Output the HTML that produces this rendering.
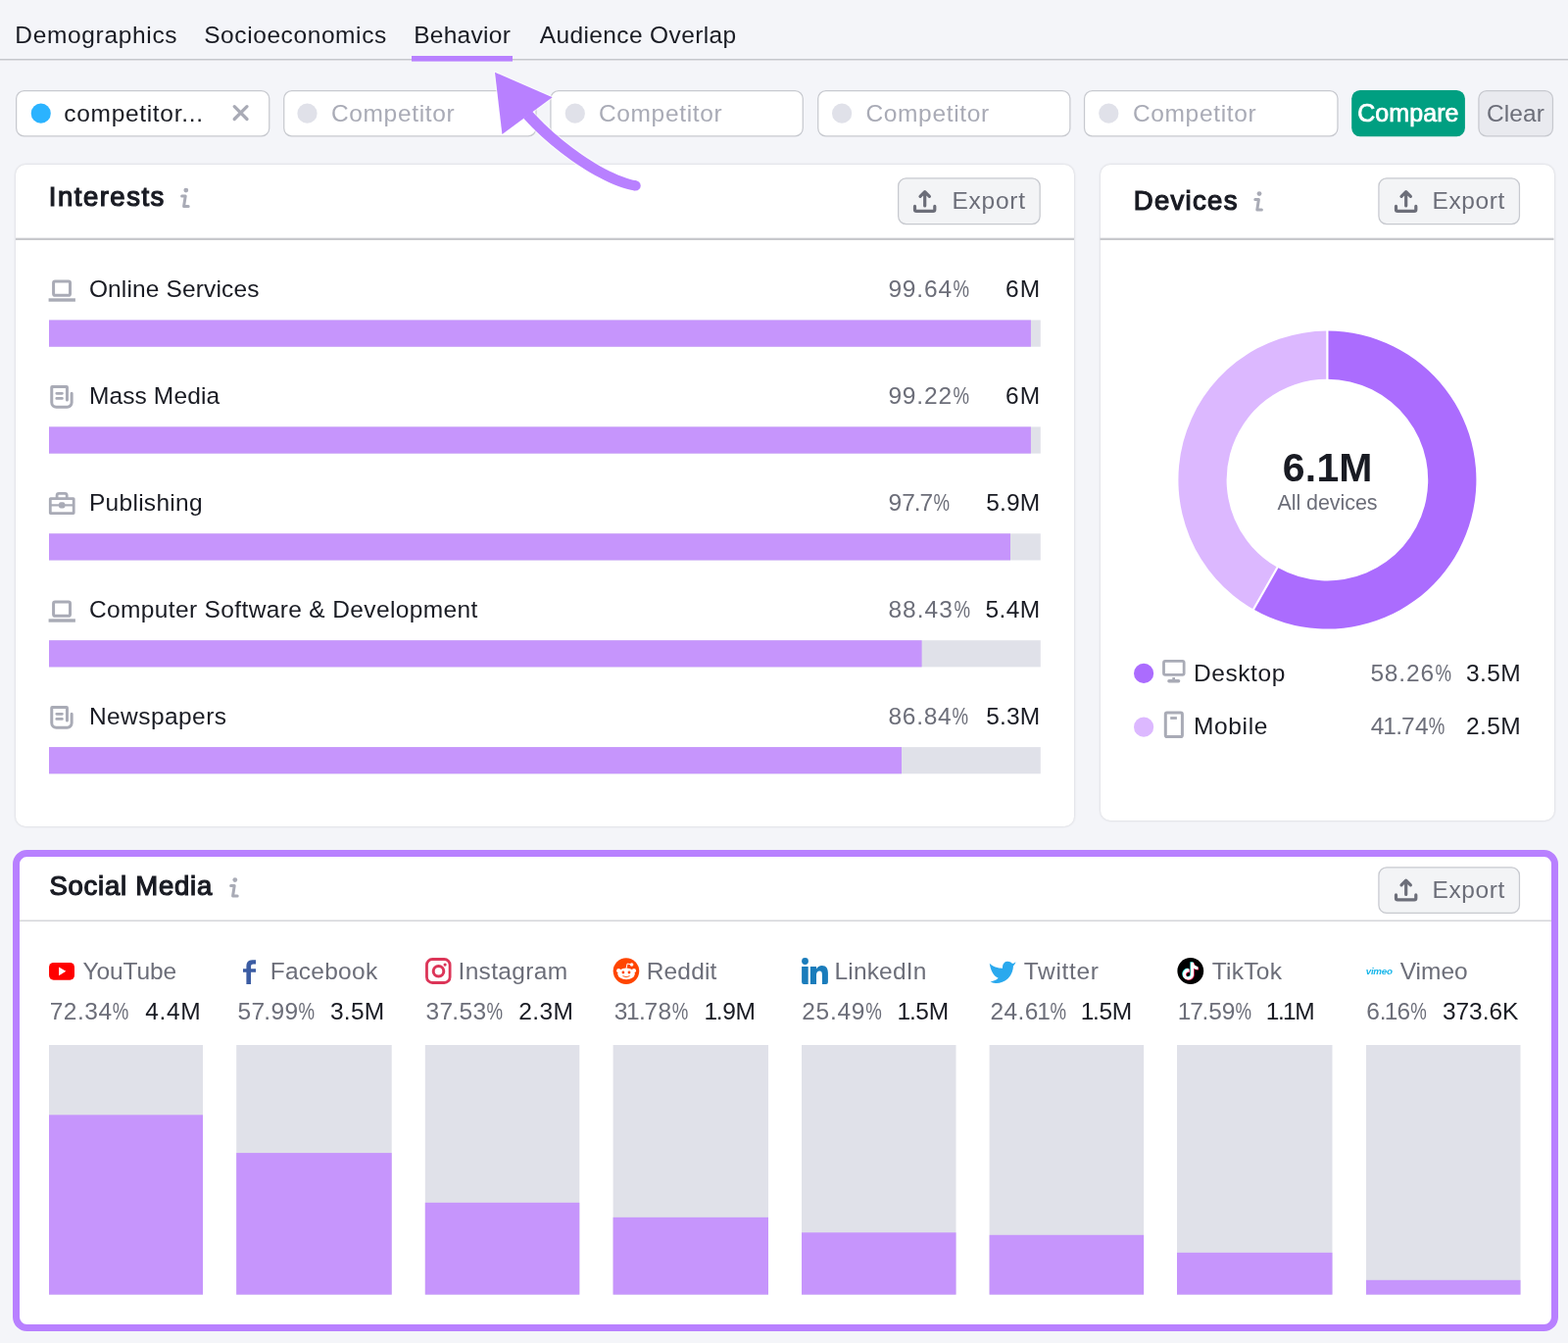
<!DOCTYPE html>
<html lang="en">
<head>
<meta charset="utf-8">
<title>Audience Behavior</title>
<style>
*{box-sizing:border-box}
html,body{margin:0;padding:0}
body{width:1600px;height:1370px;position:relative;overflow:hidden;background:#f4f5f9;font-family:"Liberation Sans",sans-serif;color:#191b23}
.a{position:absolute}
svg{position:absolute;left:0;top:0;overflow:visible}
.card{background:#fff;border-radius:10px;box-shadow:0 0 2.5px rgba(25,27,35,.2)}
.frame{left:13px;top:867px;width:1577px;height:491px;border:7px solid #b880ff;border-radius:14.5px;background:#fff}
.tx{left:0;top:0;width:1600px;height:1370px;will-change:transform}
.tx nav,.tx form,.tx section,.tx header,.tx ul,.tx li,.tx h2,.tx p{display:contents;margin:0;padding:0;font:inherit}
span.m{position:absolute;white-space:pre}
b.n1{font-weight:inherit;margin:0 -0.04em 0 -0.07em}
b.k7{font-weight:inherit;margin-right:-0.06em}
b.pc{font-weight:inherit;display:inline-block;transform:scaleX(.76);transform-origin:0 50%}
</style>
</head>
<body>

<div class="a card" style="left:16px;top:167.5px;width:1080px;height:675.5px"></div>

<div class="a card" style="left:1122.5px;top:167.5px;width:463px;height:669.5px"></div>


<div class="a frame"></div>
<svg width="1600" height="1370" viewBox="0 0 1600 1370">
<rect x="0" y="60" width="1600" height="1.5" fill="#c5c7cc"/>
<rect x="16" y="242.7" width="1080" height="2.3" fill="#c7c8cc"/>
<rect x="1122.5" y="242.7" width="463" height="2.3" fill="#c7c8cc"/>
<rect x="20" y="938.5" width="1563" height="1.5" fill="#d5d6da"/>
<rect x="16.62" y="92.62" width="258.15" height="46.15" rx="7.97" fill="#fff" stroke="#c7c9cf" stroke-width="1.25"/>
<rect x="289.73" y="92.62" width="257.25" height="46.15" rx="7.97" fill="#fff" stroke="#c7c9cf" stroke-width="1.25"/>
<rect x="561.92" y="92.62" width="257.35" height="46.15" rx="7.97" fill="#fff" stroke="#c7c9cf" stroke-width="1.25"/>
<rect x="834.73" y="92.62" width="257.15" height="46.15" rx="7.97" fill="#fff" stroke="#c7c9cf" stroke-width="1.25"/>
<rect x="1106.53" y="92.62" width="258.45" height="46.15" rx="7.97" fill="#fff" stroke="#c7c9cf" stroke-width="1.25"/>
<rect x="1379.20" y="91.90" width="115.70" height="47.30" rx="8.60" fill="#009f81"/>
<rect x="1508.92" y="92.62" width="75.55" height="46.15" rx="7.97" fill="#e9eaef" stroke="#c7c9cf" stroke-width="1.25"/>
<rect x="916.62" y="181.93" width="144.55" height="46.65" rx="7.97" fill="#f3f4f6" stroke="#c7c9cf" stroke-width="1.25"/>
<rect x="1406.92" y="181.93" width="143.55" height="46.65" rx="7.97" fill="#f3f4f6" stroke="#c7c9cf" stroke-width="1.25"/>
<rect x="1406.92" y="884.92" width="143.55" height="46.55" rx="7.97" fill="#f3f4f6" stroke="#c7c9cf" stroke-width="1.25"/>
<rect x="420" y="57" width="103" height="5.6" fill="#b880ff"/>
<circle cx="41.75" cy="115.65" r="10.05" fill="#2bb3ff"/>
<circle cx="313.5" cy="115.7" r="10.1" fill="#e0e1e9"/>
<circle cx="586.8" cy="115.7" r="10.1" fill="#e0e1e9"/>
<circle cx="859.1" cy="115.7" r="10.1" fill="#e0e1e9"/>
<circle cx="1131.3" cy="115.7" r="10.1" fill="#e0e1e9"/>
<rect x="50.0" y="326.50" width="1011.80" height="27.2" fill="#e0e1e9"/>
<rect x="50.0" y="326.50" width="1001.90" height="27.2" fill="#c695fc"/>
<rect x="50.0" y="435.40" width="1011.80" height="27.2" fill="#e0e1e9"/>
<rect x="50.0" y="435.40" width="1001.90" height="27.2" fill="#c695fc"/>
<rect x="50.0" y="544.30" width="1011.80" height="27.2" fill="#e0e1e9"/>
<rect x="50.0" y="544.30" width="981.00" height="27.2" fill="#c695fc"/>
<rect x="50.0" y="653.20" width="1011.80" height="27.2" fill="#e0e1e9"/>
<rect x="50.0" y="653.20" width="890.60" height="27.2" fill="#c695fc"/>
<rect x="50.0" y="762.10" width="1011.80" height="27.2" fill="#e0e1e9"/>
<rect x="50.0" y="762.10" width="870.00" height="27.2" fill="#c695fc"/>
<rect x="50" y="1066" width="157.00" height="254.6" fill="#e0e1e9"/>
<rect x="50" y="1137.3" width="157.00" height="183.30" fill="#c695fc"/>
<rect x="241.2" y="1066" width="158.50" height="254.6" fill="#e0e1e9"/>
<rect x="241.2" y="1176.1" width="158.50" height="144.50" fill="#c695fc"/>
<rect x="433.8" y="1066" width="157.50" height="254.6" fill="#e0e1e9"/>
<rect x="433.8" y="1226.8" width="157.50" height="93.80" fill="#c695fc"/>
<rect x="625.6" y="1066" width="158.40" height="254.6" fill="#e0e1e9"/>
<rect x="625.6" y="1241.8" width="158.40" height="78.80" fill="#c695fc"/>
<rect x="818" y="1066" width="157.50" height="254.6" fill="#e0e1e9"/>
<rect x="818" y="1257.3" width="157.50" height="63.30" fill="#c695fc"/>
<rect x="1009.6" y="1066" width="157.50" height="254.6" fill="#e0e1e9"/>
<rect x="1009.6" y="1259.8" width="157.50" height="60.80" fill="#c695fc"/>
<rect x="1201" y="1066" width="158.50" height="254.6" fill="#e0e1e9"/>
<rect x="1201" y="1277.8" width="158.50" height="42.80" fill="#c695fc"/>
<rect x="1394" y="1066" width="157.50" height="254.6" fill="#e0e1e9"/>
<rect x="1394" y="1305.8" width="157.50" height="14.80" fill="#c695fc"/>
<path d="M239.2,108.69999999999999 L252.0,121.5 M252.0,108.69999999999999 L239.2,121.5" fill="none" stroke="#a9abb6" stroke-width="3.3" stroke-linecap="round"/>
<g transform="translate(184,191.5)" fill="none" stroke="#a9abb6" stroke-width="3" stroke-linecap="round" stroke-linejoin="round"><circle cx="5.8" cy="2.6" r="2.4" fill="#a9abb6" stroke="none"/><path d="M1.6,8.5 H5.2 L3.6,18.9 H8.2"/></g>
<g transform="translate(1279.2,195)" fill="none" stroke="#a9abb6" stroke-width="3" stroke-linecap="round" stroke-linejoin="round"><circle cx="5.8" cy="2.6" r="2.4" fill="#a9abb6" stroke="none"/><path d="M1.6,8.5 H5.2 L3.6,18.9 H8.2"/></g>
<g transform="translate(234,895)" fill="none" stroke="#a9abb6" stroke-width="3" stroke-linecap="round" stroke-linejoin="round"><circle cx="5.8" cy="2.6" r="2.4" fill="#a9abb6" stroke="none"/><path d="M1.6,8.5 H5.2 L3.6,18.9 H8.2"/></g>
<g transform="translate(931.9,193.4)" fill="none" stroke="#6c6e79" stroke-width="3.2" stroke-linecap="round" stroke-linejoin="round"><path d="M11.8,16.6 V2.4 M7.1,7.0 L11.8,2.3 L16.5,7.0"/><path d="M1.6,17 V20.4 a1.6 1.6 0 0 0 1.6 1.6 H20.3 a1.6 1.6 0 0 0 1.6 -1.6 V17"/></g>
<g transform="translate(1422.9,193.4)" fill="none" stroke="#6c6e79" stroke-width="3.2" stroke-linecap="round" stroke-linejoin="round"><path d="M11.8,16.6 V2.4 M7.1,7.0 L11.8,2.3 L16.5,7.0"/><path d="M1.6,17 V20.4 a1.6 1.6 0 0 0 1.6 1.6 H20.3 a1.6 1.6 0 0 0 1.6 -1.6 V17"/></g>
<g transform="translate(1422.9,895.9)" fill="none" stroke="#6c6e79" stroke-width="3.2" stroke-linecap="round" stroke-linejoin="round"><path d="M11.8,16.6 V2.4 M7.1,7.0 L11.8,2.3 L16.5,7.0"/><path d="M1.6,17 V20.4 a1.6 1.6 0 0 0 1.6 1.6 H20.3 a1.6 1.6 0 0 0 1.6 -1.6 V17"/></g>
<g transform="translate(49.6,285.6)" fill="none" stroke="#a9abb6"><rect x="5" y="1.5" width="16.9" height="14.2" rx="1.6" stroke-width="3"/><rect x="0" y="18.7" width="27.3" height="3.4" fill="#a9abb6" stroke="none"/></g>
<g transform="translate(51.25,392.9)" fill="none" stroke="#a9abb6" stroke-linecap="round" stroke-linejoin="round"><path d="M17.2,15.2 V2 a0.5 0.5 0 0 0 -0.5 -0.5 H2 a0.5 0.5 0 0 0 -0.5 0.5 V17.6 a4.7 4.7 0 0 0 4.7 4.7 H17.2 a4.7 4.7 0 0 0 4.7 -4.7 V8.3" stroke-width="3"/><path d="M6.5,8.4 H12.2 M6.5,13.5 H12.2" stroke-width="2.7"/></g>
<g transform="translate(49.9,502.06)" fill="none" stroke="#a9abb6"><rect x="1.4" y="6.5" width="23.9" height="15" rx="0.3" stroke-width="2.8"/><path d="M8.2,6 V3.3 a2 2 0 0 1 2 -2 H16.3 a2 2 0 0 1 2 2 V6" stroke-width="2.8"/><path d="M1.4,13.3 H25.3" stroke-width="2.2"/><rect x="10.1" y="10.1" width="6.3" height="6.4" rx="2" fill="#a9abb6" stroke="none"/></g>
<g transform="translate(49.6,612.6)" fill="none" stroke="#a9abb6"><rect x="5" y="1.5" width="16.9" height="14.2" rx="1.6" stroke-width="3"/><rect x="0" y="18.7" width="27.3" height="3.4" fill="#a9abb6" stroke="none"/></g>
<g transform="translate(51.25,719.9)" fill="none" stroke="#a9abb6" stroke-linecap="round" stroke-linejoin="round"><path d="M17.2,15.2 V2 a0.5 0.5 0 0 0 -0.5 -0.5 H2 a0.5 0.5 0 0 0 -0.5 0.5 V17.6 a4.7 4.7 0 0 0 4.7 4.7 H17.2 a4.7 4.7 0 0 0 4.7 -4.7 V8.3" stroke-width="3"/><path d="M6.5,8.4 H12.2 M6.5,13.5 H12.2" stroke-width="2.7"/></g>
<path d="M1354.40,337.60 A152.0,152.0 0 1 1 1279.01,621.58 L1303.41,578.86 A102.8,102.8 0 1 0 1354.40,386.80 Z" fill="#ab6cfe"/>
<path d="M1279.01,621.58 A152.0,152.0 0 0 1 1354.40,337.60 L1354.40,386.80 A102.8,102.8 0 0 0 1303.41,578.86 Z" fill="#dcb8ff"/>
<path d="M1354.40,387.80 L1354.40,336.60" stroke="#fff" stroke-width="2.2" fill="none"/>
<path d="M1303.91,577.99 L1278.51,622.45" stroke="#fff" stroke-width="2.2" fill="none"/>
<g fill="none" stroke="#a9abb6"><rect x="1187.5" y="674.35" width="20.65" height="14" rx="1.6" stroke-width="2.8"/><path d="M1192.9,694.8 H1202.6" stroke-width="3.4" stroke-linecap="round"/><rect x="1196.3" y="691" width="2.7" height="3" fill="#a9abb6" stroke="none"/></g>
<g fill="none" stroke="#a9abb6"><rect x="1189.3" y="727.1" width="17.1" height="24.4" rx="1.6" stroke-width="3"/><rect x="1194.2" y="731.1" width="6.7" height="2.8" fill="#a9abb6" stroke="none"/></g>
<circle cx="1167.1" cy="686.9" r="10.1" fill="#ab6cfe"/><circle cx="1167.1" cy="741.65" r="10.1" fill="#dcb8ff"/>
<rect x="50.05" y="981.9" width="25.95" height="17.8" rx="4.6" fill="#ff0000"/><path d="M60.1,986.4 L67.3,990.8 L60.1,995.2 Z" fill="#fff"/>
<path d="M251.4,1004.1 V991.75 H248 V988.2 H251.4 V985.3 C251.4,981.4 253.8,979.2 257.7,979.2 H261.1 V983.4 H258.7 C256.8,983.4 256.06,984.2 256.06,985.9 V988.2 H261.1 V991.75 H256.06 V1004.1 Z" fill="#3b5ca3"/>
<g fill="none" stroke="#dc3558" stroke-width="2.8"><rect x="435.46" y="978.5" width="23.64" height="24" rx="5.8"/><circle cx="447.5" cy="990.8" r="5.3" stroke-width="3"/><circle cx="454.1" cy="984.1" r="1.6" fill="#dc3558" stroke="none"/></g>
<circle cx="638.95" cy="990.6" r="13.3" fill="#ff4500"/><g fill="#fff"><ellipse cx="639.05" cy="993.3" rx="8.8" ry="5.9"/><circle cx="631.2" cy="990.2" r="2.1"/><circle cx="646.9" cy="990.2" r="2.1"/><circle cx="644.6" cy="984" r="1.8"/><path d="M639.1,987.8 L640.1,983 L644.6,984" fill="none" stroke="#fff" stroke-width="1"/></g><circle cx="635.9" cy="992" r="1.4" fill="#ff4500"/><circle cx="642" cy="992" r="1.4" fill="#ff4500"/><path d="M635.8,995.8 Q639.05,997.8 642.3,995.8" fill="none" stroke="#ff4500" stroke-width="0.9" stroke-linecap="round"/>
<g fill="#1a7cbb"><circle cx="821.5" cy="980.5" r="3.4"/><path d="M818.1,986.1 H824.7 V1004.1 H820.1 a2 2 0 0 1 -2 -2 Z"/><path d="M826.9,986.1 H833 V988.6 C834.2,986.3 836.2,985 838.7,985 C843.2,985 844.9,988 844.9,992.6 V1002.1 a2 2 0 0 1 -2 2 H838.9 V994.4 C838.9,992.2 838.3,990.6 836.3,990.6 C834.1,990.6 833,992.3 833,994.6 V1004.1 H826.9 Z"/></g>
<path d="M1027.62,980.80 C1030.62,980.65 1032.31,982.00 1032.95,983.12 C1034.19,982.75 1035.50,982.00 1036.44,981.14 C1036.06,982.94 1035.12,984.25 1034.00,985.19 C1033.81,989.50 1032.50,994.00 1028.75,997.94 C1025.00,1001.69 1019.37,1003.45 1015.81,1003.07 C1013.75,1002.85 1011.87,1002.06 1010.45,1001.20 C1013.75,1000.82 1016.75,999.62 1018.70,997.82 C1014.50,995.87 1010.94,991.00 1009.74,982.67 C1013.00,985.75 1017.50,987.55 1023.05,987.70 C1022.67,984.25 1024.62,981.06 1027.62,980.80 Z" fill="#2aa9ee"/>
<circle cx="1214.8" cy="990.5" r="13.4" fill="#000"/><path transform="translate(1205.10,981.22) scale(0.74)" d="M12.525.02c1.31-.02 2.61-.01 3.91-.02.08 1.53.63 3.09 1.75 4.17 1.12 1.11 2.7 1.62 4.24 1.79v4.03c-1.44-.05-2.89-.35-4.2-.97-.57-.26-1.1-.59-1.62-.93-.01 2.92.01 5.84-.02 8.75-.08 1.4-.54 2.79-1.35 3.94-1.31 1.92-3.58 3.17-5.91 3.21-1.43.08-2.86-.31-4.08-1.03-2.02-1.19-3.44-3.37-3.65-5.71-.02-.5-.03-1-.01-1.49.18-1.9 1.12-3.72 2.58-4.96 1.66-1.44 3.98-2.13 6.15-1.72.02 1.48-.04 2.96-.04 4.44-.99-.32-2.15-.23-3.02.37-.63.41-1.11 1.04-1.36 1.75-.21.51-.15 1.07-.14 1.61.24 1.64 1.82 3.02 3.5 2.87 1.12-.01 2.19-.66 2.77-1.61.19-.33.4-.67.41-1.06.1-1.79.06-3.57.07-5.36.01-4.03-.01-8.05.02-12.07z" fill="#3ff0ea"/><path transform="translate(1206.50,982.22) scale(0.74)" d="M12.525.02c1.31-.02 2.61-.01 3.91-.02.08 1.53.63 3.09 1.75 4.17 1.12 1.11 2.7 1.62 4.24 1.79v4.03c-1.44-.05-2.89-.35-4.2-.97-.57-.26-1.1-.59-1.62-.93-.01 2.92.01 5.84-.02 8.75-.08 1.4-.54 2.79-1.35 3.94-1.31 1.92-3.58 3.17-5.91 3.21-1.43.08-2.86-.31-4.08-1.03-2.02-1.19-3.44-3.37-3.65-5.71-.02-.5-.03-1-.01-1.49.18-1.9 1.12-3.72 2.58-4.96 1.66-1.44 3.98-2.13 6.15-1.72.02 1.48-.04 2.96-.04 4.44-.99-.32-2.15-.23-3.02.37-.63.41-1.11 1.04-1.36 1.75-.21.51-.15 1.07-.14 1.61.24 1.64 1.82 3.02 3.5 2.87 1.12-.01 2.19-.66 2.77-1.61.19-.33.4-.67.41-1.06.1-1.79.06-3.57.07-5.36.01-4.03-.01-8.05.02-12.07z" fill="#f3235a"/><path transform="translate(1205.80,981.72) scale(0.74)" d="M12.525.02c1.31-.02 2.61-.01 3.91-.02.08 1.53.63 3.09 1.75 4.17 1.12 1.11 2.7 1.62 4.24 1.79v4.03c-1.44-.05-2.89-.35-4.2-.97-.57-.26-1.1-.59-1.62-.93-.01 2.92.01 5.84-.02 8.75-.08 1.4-.54 2.79-1.35 3.94-1.31 1.92-3.58 3.17-5.91 3.21-1.43.08-2.86-.31-4.08-1.03-2.02-1.19-3.44-3.37-3.65-5.71-.02-.5-.03-1-.01-1.49.18-1.9 1.12-3.72 2.58-4.96 1.66-1.44 3.98-2.13 6.15-1.72.02 1.48-.04 2.96-.04 4.44-.99-.32-2.15-.23-3.02.37-.63.41-1.11 1.04-1.36 1.75-.21.51-.15 1.07-.14 1.61.24 1.64 1.82 3.02 3.5 2.87 1.12-.01 2.19-.66 2.77-1.61.19-.33.4-.67.41-1.06.1-1.79.06-3.57.07-5.36.01-4.03-.01-8.05.02-12.07z" fill="#fff"/>
</svg>
<div class="a tx">
<nav aria-label="Report sections">
<span class="m" style="left:15px;top:21px;transform:translateX(0.3px);line-height:29px;font-size:24.5px;font-weight:400;letter-spacing:0.665px;color:#191b23;">Demographics</span>
<span class="m" style="left:208px;top:21px;transform:translateX(0.15px);line-height:29px;font-size:24.5px;font-weight:400;letter-spacing:0.592px;color:#191b23;">Socioeconomics</span>
<span class="m" style="left:422px;top:21px;transform:translateX(0.15px);line-height:29px;font-size:24.5px;font-weight:400;letter-spacing:0.28px;color:#191b23;">Behavior</span>
<span class="m" style="left:550px;top:21px;transform:translateX(0.8px);line-height:29px;font-size:24.5px;font-weight:400;letter-spacing:0.369px;color:#191b23;">Audience Overlap</span>
</nav>
<form aria-label="Competitors">
<span class="m" style="left:65px;top:101px;transform:translateX(0.3px);line-height:29px;font-size:24.5px;font-weight:400;letter-spacing:0.683px;color:#191b23;">competitor...</span>
<span class="m" style="left:337px;top:101px;transform:translateX(0.9px);line-height:29px;font-size:24.5px;font-weight:400;letter-spacing:0.662px;color:#a9abb6;">Competitor</span>
<span class="m" style="left:610px;top:101px;transform:translateX(0.9px);line-height:29px;font-size:24.5px;font-weight:400;letter-spacing:0.662px;color:#a9abb6;">Competitor</span>
<span class="m" style="left:883px;top:101px;transform:translateX(0.4px);line-height:29px;font-size:24.5px;font-weight:400;letter-spacing:0.662px;color:#a9abb6;">Competitor</span>
<span class="m" style="left:1155px;top:101px;transform:translateX(0.9px);line-height:29px;font-size:24.5px;font-weight:400;letter-spacing:0.662px;color:#a9abb6;">Competitor</span>
<span class="m" style="left:1385px;top:100px;transform:translateX(0.22px);line-height:30px;font-size:25px;font-weight:400;letter-spacing:0.08px;color:#ffffff;-webkit-text-stroke-width:0.7px;">Compare</span>
<span class="m" style="left:1516px;top:101px;transform:translateX(0.9px);line-height:29px;font-size:24.5px;font-weight:400;letter-spacing:0.114px;color:#6c6e79;">Clear</span>
</form>
<header aria-label="Card headers">
<span class="m" style="left:49px;top:184px;transform:translateX(0.77px);line-height:33px;font-size:27.5px;font-weight:400;letter-spacing:1.513px;color:#191b23;-webkit-text-stroke-width:1.2px;">Interests</span>
<span class="m" style="left:1156px;top:188px;transform:translateX(0.75px);line-height:33px;font-size:27.5px;font-weight:400;letter-spacing:1.317px;color:#191b23;-webkit-text-stroke-width:1.2px;">Devices</span>
<span class="m" style="left:50px;top:887px;transform:translateX(0.45px);line-height:33px;font-size:27.5px;font-weight:400;letter-spacing:0.759px;color:#191b23;-webkit-text-stroke-width:1.2px;">Social Media</span>
<span class="m" style="left:971px;top:190px;transform:translateX(0.4px);line-height:29px;font-size:24.5px;font-weight:400;letter-spacing:0.762px;color:#6c6e79;">Export</span>
<span class="m" style="left:1461px;top:190px;transform:translateX(0.4px);line-height:29px;font-size:24.5px;font-weight:400;letter-spacing:0.641px;color:#6c6e79;">Export</span>
<span class="m" style="left:1461px;top:893px;transform:translateX(0.4px);line-height:29px;font-size:24.5px;font-weight:400;letter-spacing:0.641px;color:#6c6e79;">Export</span>
</header>
<section aria-label="Interests">
<span class="m" style="left:90px;top:280px;transform:translateX(0.9px);line-height:29px;font-size:24.5px;font-weight:400;letter-spacing:0.137px;color:#191b23;">Online Services</span>
<span class="m" style="left:906px;top:280px;transform:translateX(0.4px);line-height:29px;font-size:24.5px;font-weight:400;letter-spacing:0.84px;color:#6c6e79;">99.64<b class="pc">%</b></span>
<span class="m" style="left:1025px;top:280px;transform:translateX(0.9px);line-height:29px;font-size:24.5px;font-weight:400;letter-spacing:1.286px;color:#191b23;">6M</span>
<span class="m" style="left:90px;top:389px;transform:translateX(0.9px);line-height:29px;font-size:24.5px;font-weight:400;letter-spacing:0.123px;color:#191b23;">Mass Media</span>
<span class="m" style="left:906px;top:389px;transform:translateX(0.4px);line-height:29px;font-size:24.5px;font-weight:400;letter-spacing:0.84px;color:#6c6e79;">99.22<b class="pc">%</b></span>
<span class="m" style="left:1025px;top:389px;transform:translateX(0.9px);line-height:29px;font-size:24.5px;font-weight:400;letter-spacing:1.286px;color:#191b23;">6M</span>
<span class="m" style="left:90px;top:498px;transform:translateX(0.9px);line-height:29px;font-size:24.5px;font-weight:400;letter-spacing:0.299px;color:#191b23;">Publishing</span>
<span class="m" style="left:906px;top:498px;transform:translateX(0.4px);line-height:29px;font-size:24.5px;font-weight:400;letter-spacing:0.3px;color:#6c6e79;">9<b class="k7">7</b><b class="k7">.</b>7<b class="pc">%</b></span>
<span class="m" style="left:1006px;top:498px;transform:translateX(0.15px);line-height:29px;font-size:24.5px;font-weight:400;letter-spacing:0.181px;color:#191b23;">5.9M</span>
<span class="m" style="left:90px;top:607px;transform:translateX(0.9px);line-height:29px;font-size:24.5px;font-weight:400;letter-spacing:0.367px;color:#191b23;">Computer Software &amp; Development</span>
<span class="m" style="left:906px;top:607px;transform:translateX(0.4px);line-height:29px;font-size:24.5px;font-weight:400;letter-spacing:1.04px;color:#6c6e79;">88.43<b class="pc">%</b></span>
<span class="m" style="left:1005px;top:607px;transform:translateX(0.4px);line-height:29px;font-size:24.5px;font-weight:400;letter-spacing:0.4px;color:#191b23;">5.4M</span>
<span class="m" style="left:90px;top:716px;transform:translateX(0.9px);line-height:29px;font-size:24.5px;font-weight:400;letter-spacing:0.436px;color:#191b23;">Newspapers</span>
<span class="m" style="left:906px;top:716px;transform:translateX(0.4px);line-height:29px;font-size:24.5px;font-weight:400;letter-spacing:0.76px;color:#6c6e79;">86.84<b class="pc">%</b></span>
<span class="m" style="left:1006px;top:716px;transform:translateX(0.15px);line-height:29px;font-size:24.5px;font-weight:400;letter-spacing:0.181px;color:#191b23;">5.3M</span>
</section>
<section aria-label="Devices">
<span class="m" style="left:1308px;top:453px;transform:translateX(0.87px);line-height:49px;font-size:41px;font-weight:700;letter-spacing:0.168px;color:#191b23;">6.1M</span>
<span class="m" style="left:1303px;top:500px;transform:translateX(0.4px);line-height:26px;font-size:21.5px;font-weight:400;letter-spacing:-0.06px;color:#6c6e79;">All devices</span>
<span class="m" style="left:1217px;top:672px;transform:translateX(0.9px);line-height:29px;font-size:24.5px;font-weight:400;letter-spacing:0.59px;color:#191b23;">Desktop</span>
<span class="m" style="left:1398px;top:672px;transform:translateX(0.4px);line-height:29px;font-size:24.5px;font-weight:400;letter-spacing:0.84px;color:#6c6e79;">58.26<b class="pc">%</b></span>
<span class="m" style="left:1495px;top:672px;transform:translateX(0.9px);line-height:29px;font-size:24.5px;font-weight:400;letter-spacing:0.397px;color:#191b23;">3.5M</span>
<span class="m" style="left:1217px;top:726px;transform:translateX(0.9px);line-height:29px;font-size:24.5px;font-weight:400;letter-spacing:0.669px;color:#191b23;">Mobile</span>
<span class="m" style="left:1398px;top:726px;transform:translateX(0.83px);line-height:29px;font-size:24.5px;font-weight:400;letter-spacing:0.388px;color:#6c6e79;">4<b class="n1">1</b><b class="k7">.</b>74<b class="pc">%</b></span>
<span class="m" style="left:1495px;top:726px;transform:translateX(0.9px);line-height:29px;font-size:24.5px;font-weight:400;letter-spacing:0.4px;color:#191b23;">2.5M</span>
</section>
<section aria-label="Social Media">
<span class="m" style="left:84px;top:976px;transform:translateX(0.57px);line-height:29px;font-size:24.5px;font-weight:400;letter-spacing:-0.137px;color:#6c6e79;">YouTube</span>
<span class="m" style="left:50px;top:1017px;transform:translateX(0.65px);line-height:29px;font-size:24.5px;font-weight:400;letter-spacing:0.54px;color:#6c6e79;">72.34<b class="pc">%</b></span>
<span class="m" style="left:148px;top:1017px;transform:translateX(0.33px);line-height:29px;font-size:24.5px;font-weight:400;letter-spacing:0.579px;color:#191b23;">4.4M</span>
<span class="m" style="left:275px;top:976px;transform:translateX(0.65px);line-height:29px;font-size:24.5px;font-weight:400;letter-spacing:0.275px;color:#6c6e79;">Facebook</span>
<span class="m" style="left:242px;top:1017px;transform:translateX(0.5px);line-height:29px;font-size:24.5px;font-weight:400;letter-spacing:0.44px;color:#6c6e79;">5<b class="k7">7</b>.99<b class="pc">%</b></span>
<span class="m" style="left:336px;top:1017px;transform:translateX(0.9px);line-height:29px;font-size:24.5px;font-weight:400;letter-spacing:0.278px;color:#191b23;">3.5M</span>
<span class="m" style="left:467px;top:976px;transform:translateX(0.5px);line-height:29px;font-size:24.5px;font-weight:400;letter-spacing:0.339px;color:#6c6e79;">Instagram</span>
<span class="m" style="left:434px;top:1017px;transform:translateX(0.4px);line-height:29px;font-size:24.5px;font-weight:400;letter-spacing:0.478px;color:#6c6e79;">3<b class="k7">7</b>.53<b class="pc">%</b></span>
<span class="m" style="left:529px;top:1017px;transform:translateX(0.15px);line-height:29px;font-size:24.5px;font-weight:400;letter-spacing:0.433px;color:#191b23;">2.3M</span>
<span class="m" style="left:659px;top:976px;transform:translateX(0.65px);line-height:29px;font-size:24.5px;font-weight:400;letter-spacing:0.182px;color:#6c6e79;">Reddit</span>
<span class="m" style="left:626px;top:1017px;transform:translateX(0.65px);line-height:29px;font-size:24.5px;font-weight:400;letter-spacing:0.338px;color:#6c6e79;">3<b class="n1">1</b><b class="k7">.</b>78<b class="pc">%</b></span>
<span class="m" style="left:720px;top:1017px;transform:translateX(0.15px);line-height:29px;font-size:24.5px;font-weight:400;letter-spacing:-0.35px;color:#191b23;"><b class="n1">1</b>.9M</span>
<span class="m" style="left:851px;top:976px;transform:translateX(0.5px);line-height:29px;font-size:24.5px;font-weight:400;letter-spacing:0.167px;color:#6c6e79;">LinkedIn</span>
<span class="m" style="left:818px;top:1017px;transform:translateX(0.15px);line-height:29px;font-size:24.5px;font-weight:400;letter-spacing:0.74px;color:#6c6e79;">25.49<b class="pc">%</b></span>
<span class="m" style="left:917px;top:1017px;transform:translateX(0.3px);line-height:29px;font-size:24.5px;font-weight:400;letter-spacing:-0.35px;color:#191b23;"><b class="n1">1</b>.5M</span>
<span class="m" style="left:1044px;top:976px;transform:translateX(0.85px);line-height:29px;font-size:24.5px;font-weight:400;letter-spacing:0.634px;color:#6c6e79;">Twitter</span>
<span class="m" style="left:1010px;top:1017px;transform:translateX(0.4px);line-height:29px;font-size:24.5px;font-weight:400;letter-spacing:0.44px;color:#6c6e79;">24.6<b class="n1">1</b><b class="pc">%</b></span>
<span class="m" style="left:1104px;top:1017px;transform:translateX(0.4px);line-height:29px;font-size:24.5px;font-weight:400;letter-spacing:-0.35px;color:#191b23;"><b class="n1">1</b>.5M</span>
<span class="m" style="left:1236px;top:976px;transform:translateX(0.75px);line-height:29px;font-size:24.5px;font-weight:400;letter-spacing:0.261px;color:#6c6e79;">TikTok</span>
<span class="m" style="left:1203px;top:1017px;transform:translateX(0.5px);line-height:29px;font-size:24.5px;font-weight:400;letter-spacing:-0.1px;color:#6c6e79;"><b class="n1">1</b><b class="k7">7</b>.59<b class="pc">%</b></span>
<span class="m" style="left:1293px;top:1017px;transform:translateX(0.5px);line-height:29px;font-size:24.5px;font-weight:400;letter-spacing:-0.35px;color:#191b23;"><b class="n1">1</b>.<b class="n1">1</b>M</span>
<span class="m" style="left:1428px;top:976px;transform:translateX(0.7px);line-height:29px;font-size:24.5px;font-weight:400;letter-spacing:0.01px;color:#6c6e79;">Vimeo</span>
<span class="m" style="left:1394px;top:1017px;transform:translateX(0.15px);line-height:29px;font-size:24.5px;font-weight:400;letter-spacing:-0.026px;color:#6c6e79;">6.<b class="n1">1</b>6<b class="pc">%</b></span>
<span class="m" style="left:1471px;top:1017px;transform:translateX(0.9px);line-height:29px;font-size:24.5px;font-weight:400;letter-spacing:-0.018px;color:#191b23;">373.6K</span>
<span class="m" style="left:1393px;top:985px;transform:translateX(0.78px);line-height:12px;font-size:9.8px;font-weight:700;letter-spacing:-0.29px;color:#1ab7ea;font-style:italic;">vimeo</span>
</section>
</div>
<svg width="1600" height="1370" viewBox="0 0 1600 1370" style="z-index:5"><g fill="none" stroke="#fff" stroke-opacity="0.55" stroke-width="2.4" stroke-linejoin="round"><path d="M649.45,184.32 L646.05,183.63 L642.44,182.69 L638.63,181.50 L634.65,180.08 L630.51,178.42 L626.23,176.54 L621.83,174.45 L617.32,172.14 L612.72,169.63 L608.04,166.93 L603.31,164.04 L598.52,160.98 L593.71,157.74 L588.87,154.34 L584.04,150.79 L579.21,147.09 L574.41,143.25 L569.65,139.28 L564.94,135.19 L560.30,130.99 L555.74,126.68 L551.27,122.27 L546.91,117.77 L542.68,113.20 L534.32,120.80 L538.77,125.54 L543.33,130.19 L548.00,134.74 L552.76,139.18 L557.61,143.51 L562.52,147.72 L567.48,151.80 L572.48,155.74 L577.51,159.55 L582.55,163.20 L587.60,166.69 L592.63,170.02 L597.64,173.18 L602.61,176.17 L607.53,178.96 L612.39,181.56 L617.18,183.96 L621.88,186.16 L626.49,188.13 L630.99,189.88 L635.37,191.40 L639.63,192.68 L643.76,193.71 L647.75,194.48 Z"/><circle cx="648.6" cy="189.4" r="5.15"/><path d="M505,73.8 L563.6,99.2 L512.4,136.9 Z"/></g><g fill="#b880ff"><path d="M649.45,184.32 L646.05,183.63 L642.44,182.69 L638.63,181.50 L634.65,180.08 L630.51,178.42 L626.23,176.54 L621.83,174.45 L617.32,172.14 L612.72,169.63 L608.04,166.93 L603.31,164.04 L598.52,160.98 L593.71,157.74 L588.87,154.34 L584.04,150.79 L579.21,147.09 L574.41,143.25 L569.65,139.28 L564.94,135.19 L560.30,130.99 L555.74,126.68 L551.27,122.27 L546.91,117.77 L542.68,113.20 L534.32,120.80 L538.77,125.54 L543.33,130.19 L548.00,134.74 L552.76,139.18 L557.61,143.51 L562.52,147.72 L567.48,151.80 L572.48,155.74 L577.51,159.55 L582.55,163.20 L587.60,166.69 L592.63,170.02 L597.64,173.18 L602.61,176.17 L607.53,178.96 L612.39,181.56 L617.18,183.96 L621.88,186.16 L626.49,188.13 L630.99,189.88 L635.37,191.40 L639.63,192.68 L643.76,193.71 L647.75,194.48 Z"/><circle cx="648.6" cy="189.4" r="5.15"/><path d="M505,73.8 L563.6,99.2 L512.4,136.9 Z"/></g></svg>
</body>
</html>
